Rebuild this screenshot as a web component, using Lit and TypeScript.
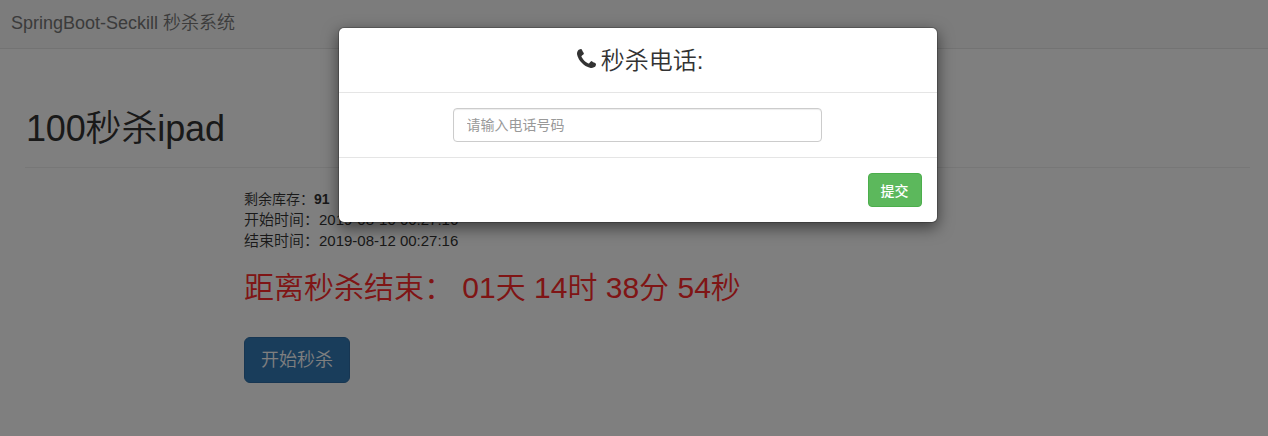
import { LitElement, html, css } from "lit";
import { customElement, property } from "lit/decorators.js";

@customElement("seckill-phone-modal")
class SeckillPhoneModal extends LitElement {
  static styles = css`
    :host { display: block; width: 600px; box-sizing: border-box; }
    * { box-sizing: border-box; }
    .dialog {
      background: #fff;
      background-clip: padding-box;
      border: 1px solid rgba(0, 0, 0, 0.2);
      border-radius: 6px;
      box-shadow: 0 5px 15px rgba(0, 0, 0, 0.5);
    }
    .header { height: 65px; padding: 20px 15px 0; border-bottom: 1px solid #e5e5e5; }
    .title {
      display: flex; justify-content: center; align-items: center; gap: 5px;
      margin: 0 0 0 4px; font-size: 24px; font-weight: 350; line-height: 26px; color: #333;
    }
    .phone { width: 19px; height: 19px; fill: #333; margin-top: -6px; }
    .body { padding: 15px 2px 15px 0; display: flex; justify-content: center; }
    .input {
      display: block; width: 369px; height: 34px; padding: 6px 12px 6px 13px;
      border: 1px solid #ccc; border-radius: 4px; background: #fff;
      box-shadow: inset 0 1px 1px rgba(0, 0, 0, 0.075);
      font: 400 14px/20px "Liberation Sans", "Noto Sans CJK SC", sans-serif;
      color: #555; outline: none;
    }
    .input::placeholder { color: #999; opacity: 1; }
    .footer { display: flex; justify-content: flex-end; padding: 15px; border-top: 1px solid #e5e5e5; }
    .submit {
      height: 34px; padding: 6px 12px 6px 11px; border: 1px solid #4cae4c; border-radius: 4px;
      background: #5cb85c; color: #fff; width: 54px; white-space: nowrap;
      font: 500 14px/20px "Noto Sans CJK SC", sans-serif;
    }
  `;

  render() {
    return html`
      <div class="dialog" role="dialog">
        <div class="header">
          <h3 class="title">
            <svg class="phone" viewBox="0 0 1408 1408" aria-hidden="true">
              <path d="M1408 1112q0 27-10 70.500t-21 68.500q-21 50-122 106-94 51-186 51-27 0-53-3.500t-57.500-12.500-47-14.500-55.500-20.500-49-18q-98-35-175-83-127-79-264-216t-216-264q-48-77-83-175-3-9-18-49t-20.500-55.500-14.500-47-12.500-57.500-3.500-53q0-92 51-186 56-101 106-122 25-11 68.500-21t70.500-10q14 0 21 3 18 6 53 76 11 19 30 54t35 63.500 31 53.500q3 4 17.500 25t21.500 35.500 7 28.500q0 20-28.500 50t-62 55-62 53-28.500 46q0 9 5 22.500t8.500 20.500 14 24 11.500 19q76 137 174 235t235 174q2 1 19 11.500t24 14 20.500 8.500 22.500 5q18 0 46-28.500t53-62 55-62 50-28.500q14 0 28.500 7t35.500 21.500 25 17.500q25 15 53.500 31t63.500 35 54 30q70 35 76 53 3 7 3 21z"/>
            </svg>
            <span>秒杀电话:</span>
          </h3>
        </div>
        <div class="body"><input class="input" type="text" placeholder="请输入电话号码" /></div>
        <div class="footer"><button class="submit">提交</button></div>
      </div>
    `;
  }
}

@customElement("app-root")
class AppRoot extends LitElement {
  @property() product = "100秒杀ipad";
  @property({ type: Number }) stock = 91;

  static styles = css`
    :host {
      display: block; position: relative; width: 100%; height: 436px; overflow: hidden;
      background: #fff; color: #333;
      font-family: "Liberation Sans", "Noto Sans CJK SC", sans-serif;
      font-weight: 350;
    }
    * { box-sizing: border-box; }
    .navbar {
      height: 49px; padding: 13px 11px 0; background: #f8f8f8; border-bottom: 1px solid #e7e7e7;
      color: #777; font-size: 18px; line-height: 20px;
    }
    .content { padding: 59px 18px 0 25px; }
    .page-header { height: 60px; margin: 0; padding: 1px 0 0 1px; border-bottom: 1px solid #eee; }
    .name { margin: 0; font-size: 36px; line-height: 40px; font-weight: 350; letter-spacing: -0.15px; }
    .detail { padding: 21px 0 0 219px; }
    .row { margin: 0; font-size: 15px; line-height: 21px; }
    .stock { font-size: 14px; line-height: 20px; }
    .stock b { font-weight: 700; }
    .countdown { margin: 20px 0 0; font-size: 30px; line-height: 33px; font-weight: 350; color: #ff2a2a; white-space: pre; }
    .start {
      display: block; width: 106px; height: 46px; margin-top: 33px; padding: 10px 16px;
      border: 1px solid #2e6da4; border-radius: 6px; background: #337ab7; color: #fff;
      font: 350 18px/24px "Liberation Sans", "Noto Sans CJK SC", sans-serif; white-space: nowrap;
    }
    .backdrop {
      position: absolute; inset: 0; display: flex; justify-content: center; align-items: flex-start;
      padding: 27px 0 0 8px; background: rgba(0, 0, 0, 0.5);
    }
  `;

  render() {
    return html`
      <nav class="navbar">SpringBoot-Seckill 秒杀系统</nav>
      <main class="content">
        <header class="page-header"><h1 class="name">${this.product}</h1></header>
        <section class="detail">
          <p class="row stock">剩余库存：<b>${this.stock}</b></p>
          <p class="row">开始时间：2019-08-10 00:27:16</p>
          <p class="row">结束时间：2019-08-12 00:27:16</p>
          <h2 class="countdown">距离秒杀结束： 01天 14时 38分 54秒</h2>
          <button class="start">开始秒杀</button>
        </section>
      </main>
      <div class="backdrop"><seckill-phone-modal></seckill-phone-modal></div>
    `;
  }
}
